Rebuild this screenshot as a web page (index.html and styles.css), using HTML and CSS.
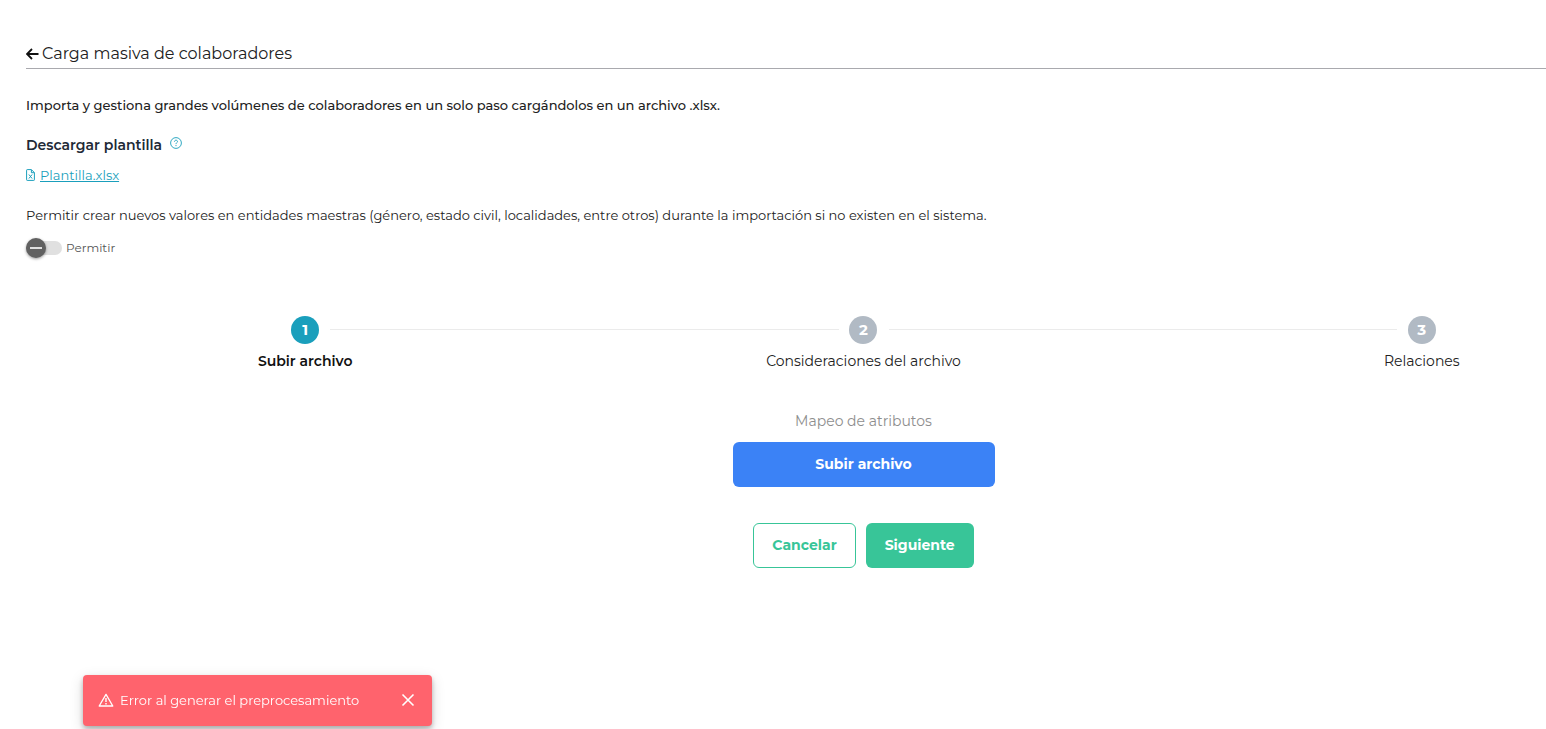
FILE: index.html
```
<!DOCTYPE html>
<html lang="es">
<head>
  <meta charset="UTF-8" />
  <meta name="viewport" content="width=device-width, initial-scale=1" />
  <title>Carga masiva de colaboradores</title>
  <link rel="stylesheet" href="styles.css">
</head>
<body>

  <main class="page">
    <!-- Header -->
    <header class="page-header">
      <a href="#" class="back-link" aria-label="Volver">
        <svg width="13" height="14" viewBox="0 0 13 14" fill="none" stroke="currentColor" stroke-width="1.8">
          <path d="M12.5 7H1.5M6 2L1 7L6 12" />
        </svg>
      </a>
      <h1>Carga masiva de colaboradores</h1>
    </header>

    <p class="intro">Importa y gestiona grandes volúmenes de colaboradores en un solo paso cargándolos en un archivo .xlsx.</p>

    <!-- Template -->
    <h2 class="template-title">
      Descargar plantilla
      <svg class="help-icon" width="12" height="12" viewBox="0 0 12 12" fill="none" stroke="currentColor">
        <circle cx="6" cy="6" r="5.4" stroke-width="0.9" />
        <path d="M4.5 4.8C4.5 3.8 5.1 3.2 6 3.2C6.9 3.2 7.5 3.8 7.5 4.6C7.5 5.6 6 5.7 6 7.1" stroke-width="0.9" />
        <circle cx="6" cy="8.6" r="0.6" fill="currentColor" stroke="none" />
      </svg>
    </h2>
    <div class="template-file">
      <svg width="9" height="12" viewBox="0 0 9 12" fill="none" stroke="currentColor">
        <path d="M0.6 1.2C0.6 0.8 0.8 0.6 1.2 0.6H5.4L8.4 3.6V10.8C8.4 11.2 8.2 11.4 7.8 11.4H1.2C0.8 11.4 0.6 11.2 0.6 10.8ZM5.4 0.8V3.7H8.2M2.9 5.5L6.1 9.5M6.1 5.5L2.9 9.5" />
      </svg>
      <a href="#">Plantilla.xlsx</a>
    </div>

    <!-- Master entities switch -->
    <p class="permit-text">Permitir crear nuevos valores en entidades maestras (género, estado civil, localidades, entre otros) durante la importación si no existen en el sistema.</p>
    <div class="permit">
      <input type="checkbox" role="switch" id="permit" class="switch">
      <label for="permit">Permitir</label>
    </div>

    <!-- Stepper -->
    <ol class="stepper">
      <li class="step active">
        <span class="step-number">1</span>
        <span class="step-label">Subir archivo</span>
      </li>
      <li class="step">
        <span class="step-number">2</span>
        <span class="step-label">Consideraciones del archivo</span>
      </li>
      <li class="step">
        <span class="step-number">3</span>
        <span class="step-label">Relaciones</span>
      </li>
    </ol>

    <section class="upload">
      <p>Mapeo de atributos</p>
      <button type="button" class="btn btn-upload">Subir archivo</button>
      <div class="actions">
        <button type="button" class="btn btn-cancel">Cancelar</button>
        <button type="button" class="btn btn-next">Siguiente</button>
      </div>
    </section>
  </main>

  <!-- Error toast -->
  <div class="toast" role="alert">
    <svg width="16" height="14" viewBox="0 0 16 14" fill="none" stroke="currentColor">
      <path d="M8 1.4L14.8 13H1.2Z" stroke-width="1.3" stroke-linejoin="round" />
      <path d="M8 5V9M8 10V11.4" stroke-width="1.4" />
    </svg>
    <span class="toast-text">Error al generar el preprocesamiento</span>
    <button type="button" class="toast-close" aria-label="Cerrar">
      <svg width="14" height="14" viewBox="0 0 14 14" fill="none" stroke="currentColor" stroke-width="1.6">
        <path d="M1.5 1.5L12.5 12.5M12.5 1.5L1.5 12.5" />
      </svg>
    </button>
  </div>

</body>
</html>
```

FILE: styles.css
```
* {
  box-sizing: border-box;
}

body {
  margin: 0;
  font-family: Montserrat, Inter, sans-serif;
  font-size: 13px;
  line-height: 20px;
  color: #212121;
  background: white;
  overflow-x: hidden;
}

h1, h2, p, ol {
  margin: 0;
  padding: 0;
}

/* the content runs past the right edge of the window */
.page {
  margin: 40px -155px 0 26px;
}

.page-header {
  display: flex;
  align-items: center;
  gap: 3px;
  height: 29px;
  border-bottom: 1px solid #a9a9ae;
}

.page-header h1 {
  font-size: 16px;
  font-weight: 400;
}

.back-link {
  display: flex;
  color: #111;
}

.intro {
  margin-top: 26px;
  font-weight: 500;
}

.template-title {
  display: flex;
  gap: 8px;
  margin-top: 20px;
  font-size: 14px;
  font-weight: 600;
  color: #212936;
}

.help-icon {
  margin-top: 2px;
  color: #1a9fbc;
}

.template-file {
  display: flex;
  align-items: center;
  gap: 5px;
  margin-top: 10px;
  color: #1a9fbc;
}

.template-file a {
  color: inherit;
}

.permit-text {
  margin-top: 20px;
}

.permit {
  display: flex;
  align-items: center;
  gap: 4px;
  margin-top: 13px;
  font-size: 12px;
  color: #555;
}

.switch {
  appearance: none;
  display: flex;
  align-items: center;
  width: 36px;
  height: 14px;
  margin: 0;
  border-radius: 7px;
  background: #e0e0e0;
}

.switch::before {
  content: "";
  flex: none;
  width: 20px;
  height: 20px;
  border-radius: 50%;
  background: linear-gradient(#e0e0e0, #e0e0e0) center / 12px 2px no-repeat #616161;
  box-shadow: 0 1px 3px rgba(0, 0, 0, 0.4);
}

.stepper {
  display: flex;
  margin-top: 58px;
  list-style: none;
  font-size: 14px;
}

.step {
  position: relative;
  flex: 1;
  display: flex;
  flex-direction: column;
  align-items: center;
  gap: 7px;
}

.step + .step::before {
  content: "";
  position: absolute;
  top: 13px;
  left: calc(-50% + 25px);
  right: calc(50% + 25px);
  height: 1px;
  background: #ebebeb;
}

.step-number {
  width: 28px;
  height: 28px;
  border-radius: 50%;
  font-size: 15px;
  line-height: 28px;
  text-align: center;
  font-weight: 700;
  color: white;
  background: #b1bac4;
}

.step.active .step-number {
  background: #1a9fbc;
}

.step.active .step-label {
  font-weight: 600;
  color: #111;
}

.upload {
  display: flex;
  flex-direction: column;
  align-items: center;
  margin-top: 40px;
  font-size: 14px;
  color: #8e8e8e;
}

.btn {
  height: 45px;
  padding: 0 18px 2px;
  border: 1px solid transparent;
  border-radius: 6px;
  font-family: inherit;
  font-size: 14px;
  font-weight: 700;
  color: white;
  cursor: pointer;
}

.btn-upload {
  width: 262px;
  margin-top: 11px;
  background: #3b82f6;
}

.actions {
  display: flex;
  gap: 10px;
  margin-top: 36px;
}

.btn-cancel {
  border-color: #38c598;
  color: #38c598;
  background: white;
}

.btn-next {
  background: #38c598;
}

.toast {
  position: fixed;
  left: 83px;
  bottom: 3px;
  display: flex;
  align-items: center;
  width: 349px;
  height: 51px;
  padding: 0 17px 2px 15px;
  border-radius: 4px;
  color: white;
  background: #ff636d;
  box-shadow: 0 3px 5px rgba(0, 0, 0, 0.25), 0 4px 14px rgba(0, 0, 0, 0.15);
}

.toast-text {
  flex: 1;
  margin-left: 6px;
}

.toast-close {
  display: flex;
  padding: 0;
  border: none;
  color: inherit;
  background: none;
  cursor: pointer;
}
```
